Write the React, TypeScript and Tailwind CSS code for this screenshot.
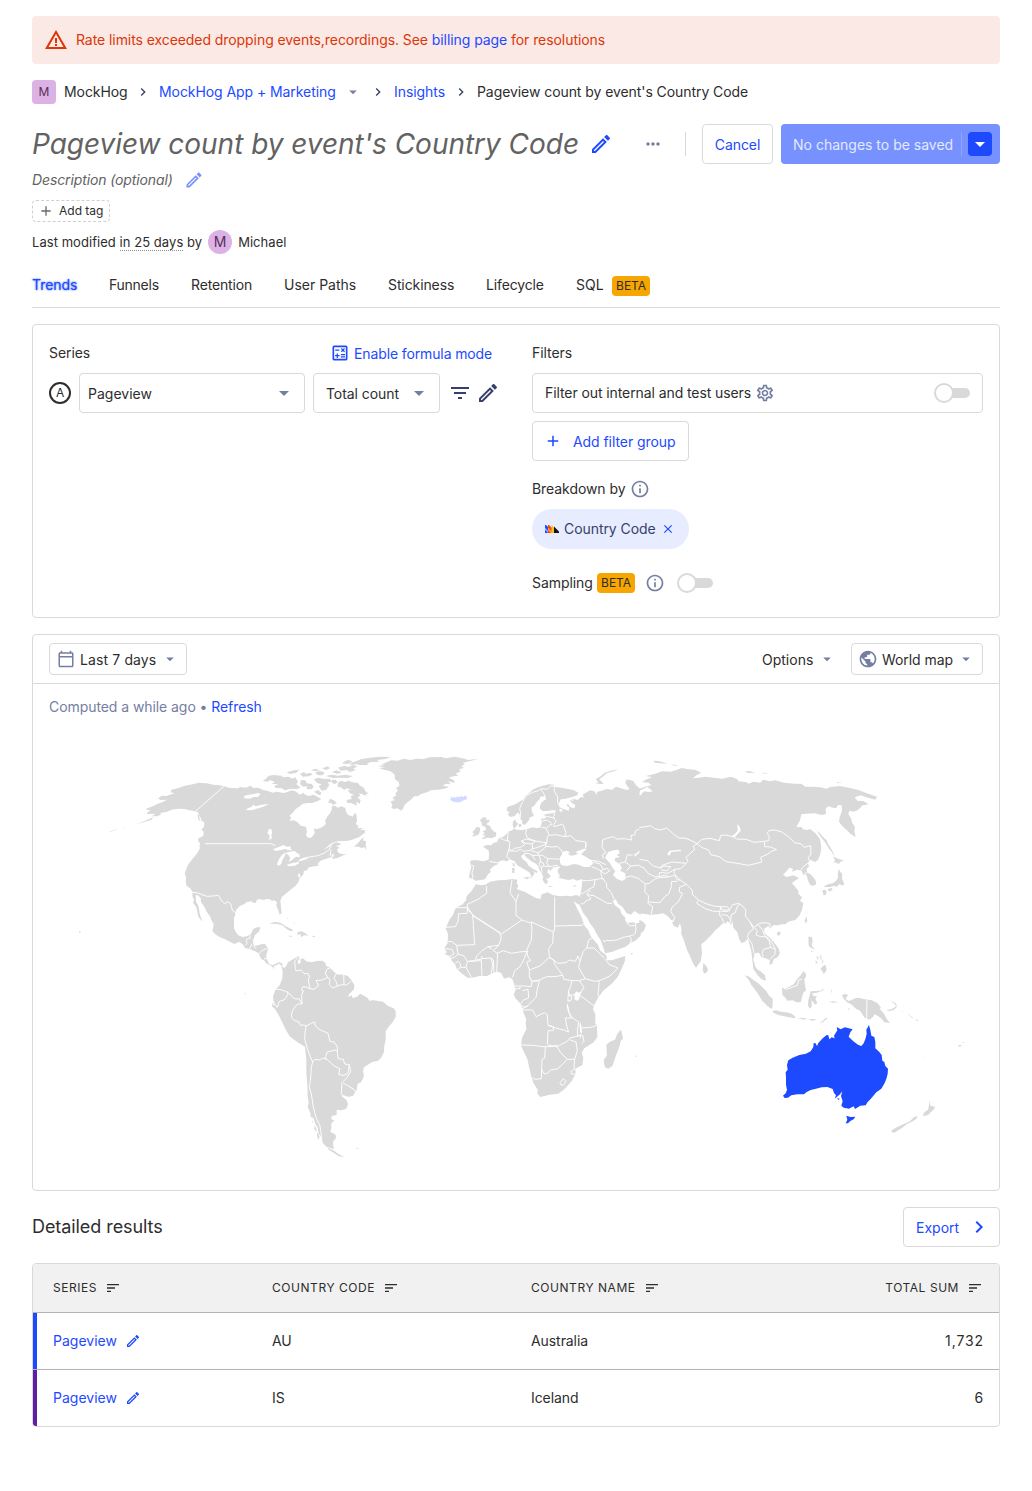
import type { ReactNode } from 'react';
import {
  MdAdd,
  MdArrowDropDown,
  MdChevronRight,
  MdClose,
  MdFilterList,
  MdInfoOutline,
  MdMoreHoriz,
  MdOutlineCalendarToday,
  MdOutlineSettings,
  MdPublic,
  MdSort,
  MdWarningAmber,
} from 'react-icons/md';

const LAND = '#d9d9d9';

/* Each region is drawn on its own local grid at three units per pixel. */
function Region({ x, y, children }: { x: number; y: number; children: ReactNode }) {
  return <g transform={`translate(${x} ${y}) scale(0.33333)`}>{children}</g>;
}

function Land({ d }: { d: string }) {
  return <path d={d} fill={LAND} />;
}

function Water({ d }: { d: string }) {
  return <path d={d} fill="#fff" />;
}

function Borders({ d }: { d: string }) {
  return <path d={d} fill="none" stroke="#fff" strokeWidth="2.8" strokeLinejoin="round" />;
}

function WorldMap() {
  return (
    <svg viewBox="49 727 934 447" className="block h-[447px] w-[934px]" aria-label="World map">
      {/* North America */}
      <Region x={70} y={740}>
        <Land d="M462 139L447 136 430 134 410 130 385 128 368 133 345 137 325 144 304 149 302 157 314 160 300 164 290 168 276 167 264 175 272 180 291 179 278 186 262 192 250 198 228 206 230 209 242 211 234 216 230 223 247 221 256 222 246 229 262 229 274 223 270 219 290 216 305 209 325 206 345 207 358 211 372 213 384 216 388 228 398 240 403 250 402 262 394 268 401 275 400 287 386 295 384 300 392 308 388 318 390 324 384 335 378 344 365 360 355 373 350 385 344 400 348 412 347 425 350 438 362 446 368 456 367 468 372 480 369 488 379 502 382 515 385 530 398 546 390 525 387 508 384 494 378 485 377 465 384 466 392 475 393 486 403 500 410 515 421 530 424 540 431 552 430 560 427 573 438 584 450 592 465 598 480 605 493 612 508 606 518 613 525 624 545 629 555 634 566 640 573 656 583 662 590 671 600 675 607 681 613 688 611 679 620 675 627 671 634 676 638 688 639 672 628 667 620 670 607 676 597 671 592 660 588 648 592 636 594 625 585 612 573 613 565 616 553 617 549 610 551 598 555 585 566 575 572 562 560 562 549 567 543 582 530 589 518 591 505 586 498 577 492 565 492 548 492 535 497 520 498 510 510 497 522 493 530 486 545 484 550 489 558 488 560 480 570 477 580 480 590 477 600 478 605 482 614 481 621 487 619 497 624 508 629 524 635 520 633 500 631 483 636 470 650 459 665 446 676 438 685 427 689 414 683 408 687 398 691 406 688 415 699 405 702 393 712 390 716 382 735 379 745 377 744 370 752 362 775 354 786 351 785 343 793 343 786 357 803 354 822 345 830 341 817 343 806 339 801 330 808 322 797 318 807 316 815 312 800 307 785 313 775 322 760 330 784 310 803 304 834 302 850 298 868 291 886 277 883 269 870 271 880 264 863 265 865 258 858 252 861 240 859 222 853 220 848 230 834 224 828 215 826 204 815 199 803 203 795 197 786 197 785 210 780 220 771 231 765 243 768 252 756 262 740 268 732 265 734 280 726 291 720 294 712 292 708 284 711 275 708 260 692 257 683 247 672 241 659 243 664 233 658 228 670 217 677 207 690 199 697 192 710 189 726 189 742 184 754 177 742 170 731 164 717 168 706 164 700 158 690 164 676 154 665 151 652 156 640 159 620 155 608 158 594 153 580 150 565 143 550 144 541 137 528 143 510 141 505 145 480 144Z" />
        <Land d="M852 320L866 307 874 297 882 291 878 301 888 304 887 316 890 329 882 321 876 324 864 320ZM384 297L390 302 400 312 405 325 398 320 387 307ZM382 222L386 225 391 243 386 240ZM391 225L398 232 400 246 394 242Z" />
        <Land d="M578 123L588 116 596 107 612 105 633 107 640 112 655 110 668 116 676 112 684 125 679 133 692 142 680 148 663 146 645 151 635 145 617 144 613 137 625 133 606 131 614 125 600 121 592 125Z" />
        <Land d="M805 127L813 122 825 126 835 122 848 127 864 129 870 137 882 143 885 152 897 163 886 161 890 168 876 163 867 160 871 168 862 172 872 181 869 191 858 185 861 197 845 190 831 188 830 180 845 177 842 168 852 166 838 158 833 151 844 149 830 145 823 150 812 142 802 140ZM780 176L792 181 801 190 790 194 781 188 774 189ZM732 155L744 150 754 158 751 166 742 163ZM693 120L706 121 710 130 726 132 731 141 725 148 709 147 712 139 700 140 690 133ZM732 118L745 113 762 117 780 116 785 127 773 126 778 135 768 150 755 152 746 139 755 133 741 129ZM785 120L797 119 803 127 795 132 786 129Z" />
        <Land d="M690 102L702 96 708 101 722 98 728 104 715 109 698 110ZM735 98L748 93 764 97 758 106 744 106ZM768 108L785 104 805 107 826 104 848 108 835 114 806 113 790 115ZM786 96L800 91 816 98 801 101ZM757 85L773 79 780 85 768 90ZM722 91L736 86 749 90 738 94ZM650 97L672 91 688 89 679 98 660 102ZM804 83L824 77 835 81 850 75 862 79 849 87 858 90 840 96 830 90 812 92Z" />
        <Land d="M816 69L832 60 847 63 840 68 853 66 874 57 900 53 930 50 962 51 946 57 921 60 928 65 903 66 891 70 896 75 871 75 858 73 838 76 846 70 826 72ZM925 78L940 76 960 72 960 92 936 88 948 83Z" />
        <Land d="M598 552L614 545 632 549 650 560 671 571 662 574 651 568 637 556 618 551ZM683 576L695 574 706 580 715 587 702 586 693 592 692 583 682 584ZM656 586L668 590 660 591ZM727 587L736 588 734 591 727 590ZM27 573L33 576 29 581ZM172 260L200 252 230 241 243 235 250 231 244 240 220 247 188 256ZM118 275L140 268 140 269 120 276ZM150 266L170 260 168 262ZM650 530L653 537 651 538ZM670 545L676 552 673 551Z" />
        <Water d="M522 168L535 164 551 162 565 159 572 163 563 171 550 171 540 176 523 175ZM528 208L545 200 550 194 557 199 575 194 597 192 580 200 565 205 548 210 532 211ZM592 279L596 268 603 267 607 275 604 284 606 295 596 300 600 288ZM609 328L624 322 640 315 651 320 662 319 661 326 668 330 657 331 645 327 630 331 617 333ZM621 374L625 361 635 346 647 337 644 349 638 358 634 371 627 377ZM646 339L658 335 673 333 689 344 689 352 678 350 666 360 656 366 661 353 655 345ZM650 374L665 370 684 366 688 370 674 377 657 379ZM686 360L701 353 717 352 709 358 692 363Z" />
        <Borders d="M462 139L376 214M405 311L602 311 617 317M684 366L694 358 717 351 744 347 763 339 778 329 785 313M783 329L780 349M367 457L384 459 410 469 430 468 445 466 456 484 464 491 474 485 483 493 487 511 498 519M525 616L531 610 529 598 540 595 540 585M548 600L557 602M546 612L538 628M566 641L576 632 592 624M550 616L558 626M582 655L592 658M638 674L637 686" />
      </Region>

      {/* Greenland and Iceland */}
      <Region x={390} y={740}>
        <Land d="M-35 84L-12 82 -5 76 -26 74 3 61 22 62 42 56 60 60 80 56 100 57 120 52 155 51 167 55 194 50 224 56 234 60 266 56 238 64 218 69 225 73 214 79 222 84 207 88 212 94 197 101 205 107 190 109 176 113 192 121 194 129 172 123 184 133 168 131 158 137 178 140 164 146 145 149 125 150 110 157 92 163 84 169 72 169 62 180 52 187 43 196 39 207 32 212 23 205 12 207 4 204 7 195 2 184 14 181 8 173 19 166 16 160 24 152 18 144 29 137 26 126 15 118 14 104 2 94Z" />
        <path
          d="M181 169L184 175 180 179 190 185 200 187 210 187 221 181 230 178 231 171 225 166 220 172 214 168 208 172 203 169 198 173 192 170 189 173Z"
          fill="#d0dbff"
        />
      </Region>

      {/* Europe, western Russia, the Middle East */}
      <Region x={390} y={740}>
        <Land d="M352 201L350 213 359 216 353 223 362 231 374 228 382 218 389 222 390 237 397 242 396 250 403 255 410 249 417 240 420 232 432 228 426 215 424 203 434 196 440 186 449 178 450 171 458 169 466 171 468 178 455 187 450 197 450 207 459 214 473 213 490 210 500 214 490 220 472 221 460 225 470 229 465 236 453 236 455 248 452 262 440 265 430 262 411 267 398 270 384 270 372 267 368 256 369 244 379 238 377 246 384 250 380 258 374 265 364 272 356 274 350 281 340 290 327 294 321 306 308 310 305 316 291 315 279 319 287 326 296 331 297 345 296 359 280 364 262 361 244 361 240 367 244 382 239 400 237 413 248 416 256 422 268 421 285 418 293 404 302 395 300 388 312 378 325 372 325 365 338 361 352 364 359 358 374 364 381 375 392 382 408 391 419 398 424 408 418 417 428 409 434 400 428 393 440 399 444 395 430 387 416 377 410 367 398 358 393 348 402 341 408 351 423 363 438 371 446 380 449 391 456 401 460 412 457 418 464 430 470 433 474 424 468 416 478 414 482 407 471 397 475 387 482 392 490 382 501 381 512 380 504 388 503 396 510 408 505 413 520 417 535 420 550 417 561 422 577 417 576 432 574 450 570 470 566 482 570 498 580 520 594 538 599 549 613 567 617 577 632 601 641 626 645 640 665 636 686 628 706 621 722 608 735 603 752 587V548L738 550 730 547 712 549 705 541 706 533 695 522 690 508 675 496 668 483 677 478 684 491 698 502 710 520 723 524 733 513 752 525V148L738 136 730 123 717 119 709 119 706 128 712 139 719 147 710 150 694 145 678 140 666 149 650 147 633 153 621 155 621 164 613 154 600 151 588 158 578 163 582 173 574 170 562 180 550 176 540 182 546 190 556 194 553 205 540 201 534 191 529 195 538 203 536 212 520 207 509 202 507 190 512 178 526 176 544 172 562 166 565 158 552 151 534 147 515 143 500 142 489 138 493 134 476 133 458 137 444 142 430 148 418 158 405 169 400 178 386 187 372 194Z" />
        <Land d="M279 232L290 233 288 240 300 239 295 248 288 252 301 259 304 266 311 274 319 278 318 289 306 294 292 293 281 297 274 297 287 287 277 284 284 280 278 274 288 270 286 260 277 258 274 247 270 241ZM244 289L253 283 247 276 255 268 260 260 270 263 270 273 265 284 252 289ZM386 251L394 252 394 260 386 260ZM368 370L373 369 374 380 369 379ZM366 384L374 384 373 399 367 399ZM398 413L418 410 414 418 401 414ZM474 437L491 439 478 441ZM549 438L561 434 553 441ZM616 129L626 127 617 118 634 107 644 98 660 93 685 87 672 94 651 99 642 107 628 118 634 124 641 132 628 132Z" />
        <Water d="M510 352L516 344 517 335 530 332 540 337 534 342 543 347 556 345 565 341 556 336 566 332 582 326 590 327 580 336 573 343 587 350 606 362 609 371 597 381 580 381 566 374 551 372 532 378 515 376 510 368ZM645 353L655 336 673 330 686 329 689 340 680 345 691 351 676 354 674 362 689 372 696 385 690 392 706 400 707 417 696 423 680 416 669 405 676 393 668 384 660 370ZM732 343L741 339 748 330 752 336 740 344 736 350ZM520 192L526 194 526 200 519 199ZM509 206L517 208 516 216 508 213Z" />
        <Borders d="M390 237L392 220 389 205 398 185 410 166 428 157 445 152 454 146M466 172L460 158 452 148M454 146L472 148 482 138 494 138 492 152 503 170 503 188 510 200M494 219L491 232 498 245 491 254 492 260 518 252M470 229L492 234M453 244L472 240 486 250M455 262L470 264 478 256 487 253M410 267L407 280 412 294 436 303 460 307 470 308 472 290 478 286 468 266M478 286L498 284 524 290 528 278 519 253M524 290L542 287 558 302 588 306 588 321M470 308L466 318 482 321 503 320 514 330 516 336M394 303L408 297 436 304 426 312 407 310ZM394 303L404 314 392 322 374 325 365 332 357 328 360 306 352 300 355 274M357 304L340 299 329 293M357 328L350 350 360 358M298 364L330 370M357 332L378 334 392 328 400 334 420 331 428 326 426 312M426 327L442 322 462 315 470 308M423 332L444 338 458 330 468 318M444 338L446 346 458 346 467 353 476 356 500 357 512 358M402 341L416 340 426 346 444 346M426 346L436 360M447 346L452 360 448 371M474 357L470 371 480 380M446 371L454 382 462 378 476 380 502 376 506 382M454 382L456 398M462 378L460 369 450 366M244 376L252 378 246 398 249 415M610 366L630 372 640 388 632 392 620 386 604 380M596 360L625 364 648 374M640 388L654 386 660 392 644 402 632 392 635 410 642 420M577 422L596 422 615 419 637 415 650 430 650 442 664 458 672 478M615 420L612 440 600 446 591 452 577 461 572 458M600 450L590 464 612 467 652 490 666 490M592 464L603 477 588 483 580 492 572 491M650 601L662 602 680 600 700 592 728 586 736 580 738 566 736 550M710 549L722 558 736 556 738 548M640 600L644 606 650 601M718 588L725 600 720 610M586 326L588 310M640 356L638 344 648 338M648 338L636 322 638 300 652 294 670 290 680 297 704 296 726 300 722 287 735 284 736 272 752 266M688 370L706 366 722 378 710 392M706 366L712 344 728 346M722 378L752 375M706 412L724 408 752 418M546 184L550 178" />
      </Region>

      {/* Siberia, China, South and East Asia */}
      <Region x={640} y={740}>
        <Land d="M-2 146L14 140 34 136 26 128 5 126 22 117 36 112 18 108 46 101 66 94 92 95 110 90 125 84 145 88 165 89 184 98 172 104 158 115 176 113 196 110 220 113 247 116 272 110 290 116 296 124 320 127 324 131 342 125 360 128 370 119 390 124 406 121 432 128 465 131 484 131 496 140 520 140 540 142 560 146 571 141 600 138 630 144 655 150 680 160 711 170 706 179 684 173 662 166 644 172 652 182 670 183 686 193 668 196 654 210 640 215 628 212 625 222 634 236 636 248 645 260 643 272 647 291 632 282 619 269 606 257 597 245 599 232 606 212 605 196 594 195 589 204 578 203 567 199 557 205 558 222 544 225 524 220 500 221 484 223 480 241 469 261 484 261 489 268 501 270 511 267 528 281 540 298 544 321 541 342 534 360 524 366 512 359 504 370 507 379 499 388 503 398 514 404 526 420 529 433 517 438 508 432 503 418 500 405 490 404 485 393 472 389 462 393 456 395 459 386 448 383 438 395 429 404 440 411 460 406 478 414 463 423 456 430 468 443 476 454 474 460 486 472 480 483 490 489 486 510 478 527 466 540 444 545 437 553 425 553 414 556 401 555 389 566 386 559 373 565 373 580 390 593 404 610 415 624 420 638 413 652 402 656 396 672 388 674 390 661 377 655 364 651 357 638 344 640 340 658 346 680 354 690 361 693 375 706 378 722 364 718 352 704 340 686 337 660 334 634 328 612 324 596 314 606 304 609 298 598 292 577 280 563 278 555 268 550 262 543 258 550 246 551 240 559 226 571 214 585 196 603 184 613 186 642 182 664 168 683 158 668 150 648 141 630 132 602 124 582 124 566 120 550 113 563 101 557 96 547 104 544 93 540 84 529 70 520 54 523 30 524 -2 520ZM-2 539L10 546 18 556 12 572 -2 583Z" />
        <Land d="M40 62L55 63 75 68 79 71 60 70 45 68ZM92 73L116 76 104 77ZM313 95L328 93 345 98 325 99ZM368 98L387 100 370 101ZM590 127L607 128 592 130ZM530 272L540 280 549 291 560 301 563 310 571 322 579 336 584 350 575 336 567 326 555 307 544 293ZM579 349L594 356 611 361 602 365 596 372 584 366 578 371 585 361ZM597 387L602 397 607 401 606 416 613 431 608 437 598 432 590 440 580 437 572 441 556 441 552 439 566 432 579 430 590 421 594 412 593 401ZM547 451L556 449 560 457 556 466 550 464ZM563 447L575 444 578 449 567 455ZM500 528L502 542 497 551 494 542ZM410 578L420 574 422 583 414 588ZM190 669L198 677 204 688 201 697 192 701 188 690ZM505 590L516 591 518 604 515 616 524 629 514 624 506 618ZM541 687L548 679 556 674 560 687 557 695 551 702 546 692ZM528 647L536 652 534 660ZM539 641L545 651 543 664ZM548 656L550 665 545 672ZM526 661L533 667 528 672ZM513 630L518 634 514 637Z" />
        <Water d="M292 252L300 262 302 272 293 282 285 291 274 288 284 283 293 272ZM82 342L88 332 122 329 124 333 94 336 88 348ZM0 152L22 140 38 154 26 156 12 154 2 166 -2 164Z" />
        <Borders d="M-2 262L18 260 32 257 44 266 62 270 80 264 100 282 116 294 138 295 156 303 172 311M172 311L186 298 210 295 238 302 242 286 258 285 280 291 290 297 318 298 342 307 372 304 386 302 388 290 382 280 386 272 404 270 426 276 446 291 464 308 484 312 492 322 512 317 513 342 505 353 509 366 492 378 480 392M172 311L184 322 206 330 212 344 238 350 258 365 298 371 324 376 350 370 366 366 362 352 384 342 394 334 410 329 392 321 374 320 373 306M172 311L160 319 164 328 146 345 138 352 144 364 130 378 122 386 104 388 102 400 120 420 140 433 156 450 158 464 176 480 198 491 220 498 240 500 248 510 268 510 278 494 296 490 308 498 318 510 316 528 330 546 342 562M-2 358L22 362 40 378 62 384 66 376 96 366 138 370M60 384L72 378 92 380 82 392 64 390M104 388L84 400 68 398 58 398 58 408 44 410 24 400 12 384 -2 378M58 410L72 406 88 410 104 406 112 420 122 420M-2 418L16 432 28 430 46 416 60 412 78 412 88 410M16 432L14 455 26 468 24 490 38 500 34 522M26 486L60 488 74 470 86 462 94 440 94 425 112 424M140 433L118 442 118 456 128 460 116 484 96 502 92 514 104 532 100 544M174 482L170 490 196 506 220 514 240 514 242 500M240 500L262 500 270 510 264 514 244 514M240 514L238 524 246 534 252 550M244 524L262 526 272 540 268 552M272 540L274 524 286 518 290 504 298 492M278 557L276 544M330 546L340 568 328 576 322 590 336 612 342 640M342 562L352 572 348 585 362 590 378 590 388 604 392 622 370 628 366 640 370 650M342 562L358 550 378 548 390 552 390 562M352 552L368 570 372 584 386 596 398 612 406 628 404 644 390 658M392 622L406 628M492 404L505 394" />
      </Region>

      {/* South America */}
      <Region x={230} y={930}>
        <Land d="M205 78L209 84 203 94 204 101 212 99 211 88 220 85 228 94 245 97 259 93 277 92 287 99 287 107 300 113 306 120 320 133 341 134 354 138 364 151 373 165 372 178 358 192 354 201 366 196 367 204 382 200 390 191 400 196 412 203 419 213 428 210 444 213 459 215 474 228 491 235 497 243 497 261 488 277 476 290 467 304 467 330 463 348 462 366 453 384 443 393 428 395 416 403 402 412 399 423 402 439 393 457 383 461 380 480 369 497 356 501 340 495 336 499 350 511 354 523 349 536 335 541 320 539 320 555 305 558 304 567 313 572 304 580 304 595 301 605 317 614 318 625 310 634 309 646 313 656 304 655 289 650 279 640 276 632 272 618 266 612 263 593 256 581 250 563 242 561 241 548 233 531 236 519 233 498 232 463 229 430 229 388 225 350 203 337 180 320 169 302 158 280 147 257 135 237 126 229 128 218 136 221 130 212 129 199 137 178 149 166 157 145 158 123 154 108 163 114 169 107 174 97 189 88ZM304 658L315 664 325 672 343 681 326 679 313 670 303 664ZM291 652L307 660 300 663ZM376 655L388 655 382 657ZM44 190L48 190 47 194Z" />
        <Land d="M247 573L249 579 245 578ZM254 586L260 598 258 606 253 596ZM262 606L269 621 266 629 261 618Z" />
        <Borders d="M204 81L194 94 196 116 198 123 212 120 222 131 235 131 238 140 235 152 240 176 228 171 218 170 214 180 220 182 215 195 216 222 206 221 196 228 186 246 184 262 194 272 206 275 211 286 222 285 228 288M240 176L252 178 266 166 258 152 276 150 294 142 286 132 290 118 304 112M294 142L300 150 298 164 308 174 322 168 318 154 312 146 318 132M322 168L336 164 350 165 362 155M341 134L342 162M134 178L150 178 172 186 174 194 162 210 148 214 142 232 136 224 128 222M172 186L180 192 192 206 208 207 216 222M228 288L244 280 254 276 256 288 268 298 294 310 300 334 312 336 322 350 322 364 316 360 292 366 286 382 290 388 278 384 270 390 254 388 248 396 240 378 230 348 224 326 226 300ZM322 364L324 386 340 388 344 402 358 404 354 430 342 436 326 434 330 416 312 408 300 396 288 386M358 404L362 426 348 446 336 458 334 488 338 500M340 460L352 466 374 480 378 490M248 396L244 412 242 444 238 472 244 492 250 532 258 562 270 588 276 632M356 196L370 188 388 188" />
      </Region>

      {/* Africa */}
      <Region x={430} y={930}>
        <Land d="M138 -138L150 -134 166 -136 180 -145 205 -149 228 -150 246 -153 262 -151 260 -141 265 -132 260 -124 270 -119 286 -114 301 -105 318 -96 331 -93 335 -107 353 -113 368 -105 391 -101 408 -103 425 -101 438 -105 448 -102 454 -87 450 -75 442 -79 431 -87 443 -61 455 -38 464 -12 475 1 482 19 493 32 503 43 511 62 526 73 531 82 529 91 545 91 567 84 586 78 585 92 577 112 563 141 545 161 522 180 506 200 494 222 489 238 496 252 496 279 501 289 502 322 491 337 463 355 455 368 460 384 457 405 436 416 437 430 426 452 404 477 385 491 359 494 330 501 322 490 323 479 310 458 303 436 296 405 292 387 280 363 273 345 276 324 289 297 287 279 289 268 280 247 278 237 270 219 256 205 251 193 257 181 253 164 247 147 237 142 222 146 214 130 205 125 191 128 171 138 149 138 126 143 113 143 96 131 80 116 75 103 64 91 60 79 45 73 50 66 43 55 53 39 54 12 47 -5 59 -32 69 -45 75 -62 86 -71 98 -77 108 -89 110 -102 124 -116Z" />
        <Land d="M573 299L576 309 579 327 573 331 568 350 556 382 547 408 535 416 524 411 521 391 531 376 529 344 540 335 555 329 562 311ZM253 155L256 158 252 160ZM615 376L620 379 615 381ZM672 402L674 405ZM602 69L610 70 604 74Z" />
        <Water d="M433 192L439 184 446 188 456 184 450 196 448 206 442 212 434 209ZM412 220L416 232 418 246 428 264 422 262 414 246 410 228ZM450 274L455 290 456 312 450 306 449 288Z" />
        <Borders d="M82 -67L112 -67 112 -77 144 -92 170 -110 170 -132M112 -67L112 -50 86 -49 84 -25 76 -10 48 -8M112 -70L128 -45 134 44 80 46 66 35 54 35M128 -45L210 8 214 24 206 46 174 50 156 62 140 78 136 92M110 -64L130 -44M128 -43L214 12 276 -30 258 -44 258 -86 240 -112 246 -150M258 -86L266 -108M276 -30L298 -22 304 -24 306 -2 304 30 290 60 294 66M304 -24L366 4 374 2 374 -100M374 -12L456 -14 466 -24M370 4L368 40 356 56 358 80 372 92M46 56L66 58 72 72 60 78M80 46L84 72 102 78 112 94 136 92M62 86L76 80 84 72M76 100L84 94 92 102 90 114 82 118M92 112L108 112 112 96M108 112L124 142M116 94L154 92 156 138M136 90L154 88M154 86L182 84 188 100 184 132M154 86L156 78M182 84L190 90 192 128M206 46L190 62 202 70 202 88 200 126M188 58L174 50M202 70L220 62 244 70 268 66 290 64 284 84 270 110 254 122 248 142M290 64L294 80 302 92 290 96 298 120 330 108 358 82 374 92 372 100 388 122 398 136 372 140 350 140 328 150 306 154 298 140 298 120M372 92L384 100 408 98 418 90 436 94 444 78 450 94M450 94L460 64 470 54 492 54 512 74 524 84M470 54L476 30 492 20M450 94L446 112 456 130 466 146 494 154 508 152 522 146 540 138 564 114 538 104 526 88M508 152L504 194 512 206M398 136L402 148 426 152 448 152 466 146M426 152L422 170 416 182 418 196 434 194M448 152L462 172 452 188M450 196L492 228M416 182L414 204 414 216M414 196L424 198 424 210 414 214M298 140L306 154 328 152 322 178 318 202 302 218 290 230 276 236M306 154L304 170 284 168 254 168M256 176L270 176 270 168M278 182L294 178 296 204 280 210 272 222M274 226L282 232 294 228M278 240L308 240 318 260 344 248 352 254 354 286 370 290 370 302 354 302 352 342 362 350M354 286L384 296 402 300 416 306 410 288 406 264 428 264 446 276M446 276L442 304 444 318 420 324 412 334 380 350 360 346M456 294L484 292 500 286M442 318L458 316 462 334 456 340M450 312L452 324M273 345L310 346 338 350 362 350 382 346M346 350L344 384 336 388 334 446 316 448 308 444M380 348L392 368 412 388 434 388 442 362 438 336 420 330M412 388L398 402 384 416 362 420 350 432 340 430 336 418M434 388L432 408 434 418 422 424 426 434 436 430M390 458L400 446 408 454 400 466 392 464Z" />
      </Region>

      {/* Southeast Asia and Oceania */}
      <Region x={720} y={930}>
        <Land d="M74 136L88 140 99 149 115 160 132 176 141 186 146 196 158 206 158 225 155 237 143 229 127 213 111 187 94 165 87 151ZM157 243L168 241 186 246 200 247 215 251 227 261 224 265 200 260 175 255 161 249ZM186 173L196 176 212 168 222 162 231 148 241 137 250 124 257 130 259 138 253 148 255 166 258 181 250 188 246 202 242 217 229 217 218 211 202 212 196 203 187 194ZM265 211L269 197 272 184 285 183 302 182 312 174 308 182 290 188 277 190 280 199 291 198 286 206 292 219 286 224 279 216 275 210 275 230 269 236 264 226ZM366 196L373 192 385 194 379 202 378 208 386 213 396 209 406 205 416 203 430 207 456 211 473 220 483 233 479 236 492 251 500 267 510 279 494 277 479 261 464 253 458 262 448 269 434 263 420 242 406 235 394 223 380 216 370 205ZM500 240L514 238 525 232 528 225 530 232 520 241 506 243ZM511 211L527 220 532 229 526 224ZM539 238L550 246 548 246ZM560 250L580 264 576 264ZM585 265L597 274 590 272ZM234 264L246 263 262 266 250 269ZM268 267L290 268 280 272 270 271ZM300 279L318 264 324 264 308 277ZM333 176L337 184 335 190ZM325 215L340 214 356 217 340 218ZM385 233L389 236 386 242ZM606 372L612 378 621 386 615 382ZM714 346L724 345 724 349 716 350ZM726 338L733 336 730 340ZM636 322L640 334ZM640 348L643 357Z" />
        <Land d="M627 507L628 517 632 527 646 531 640 539 624 555 608 559 613 547 624 539 627 526ZM592 558L590 566 573 577 561 582 546 594 531 603 521 609 513 602 530 592 553 581 570 574 581 562Z" />
        <Borders d="M441 208L440 268M190 174L200 178 218 171 232 166 236 150 246 148" />
        <path
          d="M189 497L197 490 201 480 198 464 198 443 197 427 203 419 201 405 205 391 218 383 238 375 258 371 272 364 280 351 281 340 286 339 291 348 295 339 308 325 320 315 325 316 328 328 335 322 344 325 342 317 352 301 350 291 362 298 375 292 398 298 391 307 386 320 400 334 414 344 424 348 431 340 436 327 440 312 439 299 447 285 451 300 454 317 463 321 466 336 466 355 478 366 485 375 487 392 493 396 496 408 504 416 503 432 499 447 494 459 484 476 469 487 452 507 443 516 437 526 421 527 405 537 401 529 387 536 371 533 364 527 368 514 363 498 367 484 360 493 344 506 348 496 342 489 338 477 322 471 305 472 285 477 272 480 260 486 252 493 232 493 214 496 204 503 194 504ZM379 557L391 561 406 560 401 568 391 573 384 580 377 580 382 569ZM352 505L360 506 354 510Z"
          fill="#1d4aff"
        />
      </Region>
    </svg>
  );
}

function PencilIcon({ className }: { className: string }) {
  return (
    <svg viewBox="0 0 24 24" className={`shrink-0 ${className}`} fill="currentColor">
      <path d="M14.060 9.020l.92.92L5.920 19H5v-.92l9.060-9.060M17.660 3c-.25 0-.51.1-.7.29l-1.830 1.830 3.750 3.750 1.830-1.830a.996.996 0 0 0 0-1.410l-2.340-2.340c-.2-.2-.45-.29-.71-.29zm-3.600 3.190L3 17.250V21h3.750L17.810 9.940l-3.750-3.750z" />
    </svg>
  );
}

function CalculatorIcon() {
  return (
    <svg viewBox="0 0 24 24" className="size-5" fill="currentColor">
      <path d="M19 3H5a2 2 0 0 0-2 2v14c0 1.100.9 2 2 2h14a2 2 0 0 0 2-2V5a2 2 0 0 0-2-2Zm0 16H5V5h14v14Z" />
      <path d="M6.250 7.720h5v1.500h-5zM13 15.750h5v1.500h-5zM13 13.250h5v1.500h-5zM8 18h1.500v-2h2v-1.500h-2v-2H8v2H6V16h2zM14.090 10.950l1.410-1.410 1.410 1.410 1.060-1.060-1.410-1.420 1.410-1.410L16.910 6 15.500 7.410 14.090 6l-1.060 1.060 1.410 1.410-1.410 1.420z" />
    </svg>
  );
}

function HedgehogLogo() {
  return (
    <svg viewBox="0 0 28 16" className="h-2 w-3.5">
      <path d="M0 0H2L8 6V16H0Z" fill="#1d4aff" />
      <path d="M0 5L9 14V16H6L0 10Z" fill="#8f9fff" />
      <path d="M6 0H8L14 6V16H6Z" fill="#f54e00" />
      <path d="M6 5L14 13V16H12L6 10Z" fill="#ff9a4d" />
      <path d="M13 0L19 6V16H13Z" fill="#f9bd2b" />
      <path d="M18 3L28 13V16H18Z" fill="#151515" />
    </svg>
  );
}

function Toggle() {
  return (
    <span className="relative flex h-5 w-9 items-center">
      <span className="ml-1 h-2.5 w-8 rounded-full bg-[#d9d9d9]" />
      <span className="absolute left-0 top-0 size-5 rounded-full border-2 border-[#d9d9d9] bg-white" />
    </span>
  );
}

function BetaTag() {
  return (
    <span className="flex h-5 w-[38px] items-center justify-center rounded bg-[#f7a501] text-xs text-[#2d2d2d]">
      BETA
    </span>
  );
}

const TABS = [
  { label: 'Trends', style: 'w-[45px] text-[#1d4aff] [text-shadow:0_0_2px_#1d4aff]' },
  { label: 'Funnels', style: 'w-[50px] tracking-[-0.25px]' },
  { label: 'Retention', style: 'w-[61px] tracking-[-0.15px]' },
  { label: 'User Paths', style: 'w-[72px] tracking-normal' },
  { label: 'Stickiness', style: 'w-[66px] tracking-[-0.1px]' },
  { label: 'Lifecycle', style: 'w-[58px] tracking-[-0.15px]' },
];

const ROWS = [
  { accent: 'bg-[#1d4aff]', code: 'AU', name: 'Australia', total: '1,732' },
  { accent: 'bg-[#621da6]', code: 'IS', name: 'Iceland', total: '6' },
];

function HeaderCell({ label, className = '' }: { label: string; className?: string }) {
  return (
    <div className={`flex items-center ${className}`}>
      <span className="text-xs tracking-[0.55px]">{label}</span>
      <MdSort className="ml-2 size-4" />
    </div>
  );
}

export default function App() {
  return (
    <div className="min-h-[1491px] w-[1032px] bg-white px-8 pt-4 font-['Inter',sans-serif] text-sm leading-5 tracking-[-0.07px] text-[#2d2d2d]">
      <div className="flex h-12 items-center rounded bg-[#fbe9e6] px-3 text-[#db3707]">
        <MdWarningAmber className="mr-2 size-6" />
        <p>
          Rate limits exceeded dropping events,recordings. See <a className="text-[#1d4aff]">billing page</a> for
          resolutions
        </p>
      </div>

      <nav className="mt-4 flex h-6 items-center">
        <span className="mr-2 flex size-6 items-center justify-center rounded bg-[#dcb1e3] text-xs text-[#572e5e]">
          M
        </span>
        <span className="w-[63px]">MockHog</span>
        <MdChevronRight className="mx-2 size-4 text-[#35416b]" />
        <a className="w-[177px] whitespace-nowrap text-[#1d4aff]">MockHog App + Marketing</a>
        <MdArrowDropDown className="ml-2 size-[18px] text-[#747ea2]" />
        <MdChevronRight className="mx-2 size-4 text-[#35416b]" />
        <a className="w-[51px] text-[#1d4aff]">Insights</a>
        <MdChevronRight className="mx-2 size-4 text-[#35416b]" />
        <span>Pageview count by event's Country Code</span>
      </nav>

      <header className="mt-5 flex h-10 items-center">
        <h1 className="w-[546px] whitespace-nowrap text-[28px] leading-10 tracking-[-0.03px] text-[#626262] italic">
          Pageview count by event's Country Code
        </h1>
        <PencilIcon className="ml-[11px] size-6 text-[#1d4aff]" />
        <div className="ml-auto flex items-center">
          <MdMoreHoriz className="size-5 text-[#747ea2]" />
          <span className="mr-4 ml-[22px] h-6 w-px bg-[#d9d9d9]" />
          <button className="h-10 w-[71px] rounded border border-[#d9d9d9] pt-0.5 text-[#1d4aff]">Cancel</button>
          <div className="ml-2 flex h-10 items-center rounded bg-[#7792ff] pr-2 pl-3 text-[#e4e9ff]">
            <span className="mt-0.5 w-[160px] whitespace-nowrap tracking-normal">No changes to be saved</span>
            <span className="mr-1.5 ml-2 h-6 w-px bg-[#8ea5ff]" />
            <span className="flex size-6 items-center justify-center rounded bg-[#1d4aff] text-white">
              <MdArrowDropDown className="size-6" />
            </span>
          </div>
        </div>
      </header>

      <div className="mt-1 flex h-6 items-center tracking-[-0.12px] text-[#626262] italic">
        <span className="w-[140px] whitespace-nowrap">Description (optional)</span>
        <PencilIcon className="ml-3 size-5 text-[#7792ff]" />
      </div>

      <div className="mt-2 flex h-[22px] w-[78px] items-center rounded border border-dashed border-[#d0d0d0] pl-[5px] text-xs tracking-normal">
        <MdAdd className="mr-[5px] size-4 text-[#6a6a6a]" />
        Add tag
      </div>

      <div className="mt-2 flex h-6 items-center text-[13px] tracking-[0.05px]">
        <span>Last modified&nbsp;</span>
        <span className="border-b border-dotted border-[#8f8f8f] leading-4">in 25 days</span>
        <span>&nbsp;by</span>
        <span className="mx-1.5 flex size-6 items-center justify-center rounded-full bg-[#dcb1e3] text-sm text-[#572e5e]">
          M
        </span>
        <span>Michael</span>
      </div>

      <div className="mt-2 flex h-[46px] items-center gap-8 border-b border-[#d9d9d9]">
        {TABS.map((tab) => (
          <span key={tab.label} className={`whitespace-nowrap ${tab.style}`}>
            {tab.label}
          </span>
        ))}
        <span className="flex items-center">
          <span className="w-9 tracking-normal">SQL</span>
          <span className="mt-0.5">
            <BetaTag />
          </span>
        </span>
      </div>

      <section className="mt-4 flex h-[294px] rounded border border-[#d9d9d9] px-4">
        <div className="w-[451px]">
          <div className="mt-4 flex h-6 items-center justify-between">
            <span>Series</span>
            <a className="mr-2 flex items-center gap-1 text-[#1d4aff]">
              <CalculatorIcon />
              <span className="mt-0.5 w-[138px] whitespace-nowrap tracking-[-0.12px]">Enable formula mode</span>
            </a>
          </div>
          <div className="mt-2 flex h-10 items-center">
            <span className="mr-2 flex size-[22px] items-center justify-center rounded-full border-2 border-[#2d2d2d] text-xs">
              A
            </span>
            <div className="flex h-10 w-[226px] items-center justify-between rounded border border-[#d9d9d9] pr-2 pl-2">
              <span className="mt-0.5 tracking-normal">Pageview</span>
              <MdArrowDropDown className="size-6 text-[#747ea2]" />
            </div>
            <div className="ml-2 flex h-10 w-[127px] items-center justify-between rounded border border-[#d9d9d9] pr-2 pl-3">
              <span className="mt-0.5">Total count</span>
              <MdArrowDropDown className="size-6 text-[#747ea2]" />
            </div>
            <MdFilterList className="ml-2 size-6 shrink-0 text-[#35416b]" />
            <PencilIcon className="ml-1 size-6 text-[#35416b]" />
          </div>
        </div>

        <div className="ml-8 w-[451px]">
          <div className="mt-4 flex h-6 items-center">Filters</div>
          <div className="mt-2 flex h-10 items-center rounded border border-[#d9d9d9] px-3">
            <span className="w-[206px] whitespace-nowrap tracking-[-0.09px]">Filter out internal and test users</span>
            <MdOutlineSettings className="ml-1 size-5 text-[#747ea2]" />
            <span className="ml-auto">
              <Toggle />
            </span>
          </div>
          <button className="mt-2 flex h-10 w-[157px] items-center rounded border border-[#d9d9d9] pl-[11px] text-[#1d4aff]">
            <MdAdd className="mr-[11px] size-[18px]" />
            <span className="mt-0.5">Add filter group</span>
          </button>
          <div className="mt-4 flex h-6 items-center">
            <span className="w-[94px] whitespace-nowrap">Breakdown by</span>
            <MdInfoOutline className="ml-1 size-5 text-[#747ea2]" />
          </div>
          <div className="mt-2 flex h-10 w-[157px] items-center rounded-full bg-[#e8ecff] pl-[13px] text-[#35416b]">
            <HedgehogLogo />
            <span className="ml-[5px] w-[91px] whitespace-nowrap">Country Code</span>
            <MdClose className="ml-1.5 size-3.5 text-[#1d4aff]" />
          </div>
          <div className="mt-6 flex h-5 items-center">
            <span className="w-[65px]">Sampling</span>
            <BetaTag />
            <MdInfoOutline className="mr-3 ml-2.5 size-5 text-[#747ea2]" />
            <Toggle />
          </div>
        </div>
      </section>

      <section className="mt-4 h-[557px] rounded border border-[#d9d9d9]">
        <div className="flex h-[49px] items-center border-b border-[#d9d9d9] px-4">
          <div className="flex h-8 w-[138px] items-center rounded border border-[#d9d9d9] px-[7px]">
            <MdOutlineCalendarToday className="mr-[5px] size-[18px] text-[#747ea2]" />
            <span className="mt-0.5 tracking-[0.12px]">Last 7 days</span>
            <MdArrowDropDown className="ml-auto size-[18px] text-[#747ea2]" />
          </div>
          <div className="ml-auto flex items-center">
            <span className="mt-0.5 w-[51px] tracking-normal">Options</span>
            <MdArrowDropDown className="mr-[15px] ml-[5px] size-[18px] text-[#747ea2]" />
            <div className="flex h-8 w-[132px] items-center rounded border border-[#d9d9d9] pr-[7px] pl-1.5">
              <MdPublic className="mr-1 size-5 text-[#747ea2]" />
              <span className="mt-0.5">World map</span>
              <MdArrowDropDown className="ml-auto size-[18px] text-[#747ea2]" />
            </div>
          </div>
        </div>
        <p className="mt-[13px] ml-4 h-5 text-[#747ea2]">
          Computed a while ago • <a className="text-[#1d4aff]">Refresh</a>
        </p>
        <div className="mt-[10px] ml-4">
          <WorldMap />
        </div>
      </section>

      <div className="mt-4 flex h-10 items-center justify-between">
        <h2 className="text-lg">Detailed results</h2>
        <button className="flex h-10 w-[97px] items-center rounded border border-[#d9d9d9] pr-2 pl-3 text-[#1d4aff]">
          <span className="mt-0.5 tracking-normal">Export</span>
          <MdChevronRight className="ml-auto size-6" />
        </button>
      </div>

      <section className="mt-4 overflow-hidden rounded border border-[#d9d9d9]">
        <div className="grid h-12 grid-cols-[223px_259px_1fr_auto] items-center bg-[#f1f1f1] pr-4">
          <HeaderCell label="SERIES" className="pl-5" />
          <HeaderCell label="COUNTRY CODE" className="pl-4" />
          <HeaderCell label="COUNTRY NAME" className="pl-4" />
          <HeaderCell label="TOTAL SUM" />
        </div>
        {ROWS.map((row) => (
          <div
            key={row.code}
            className="grid h-[57px] grid-cols-[4px_219px_259px_1fr_auto] items-center border-t border-[#b4b4b4] pr-4"
          >
            <span className={`h-full ${row.accent}`} />
            <a className="flex items-center pl-4 text-[#1d4aff]">
              <span className="w-16 tracking-normal">Pageview</span>
              <PencilIcon className="ml-2 size-4" />
            </a>
            <span className="pl-4">{row.code}</span>
            <span className="pl-4">{row.name}</span>
            <span className="-mr-px tracking-[0.9px]">{row.total}</span>
          </div>
        ))}
      </section>
    </div>
  );
}
